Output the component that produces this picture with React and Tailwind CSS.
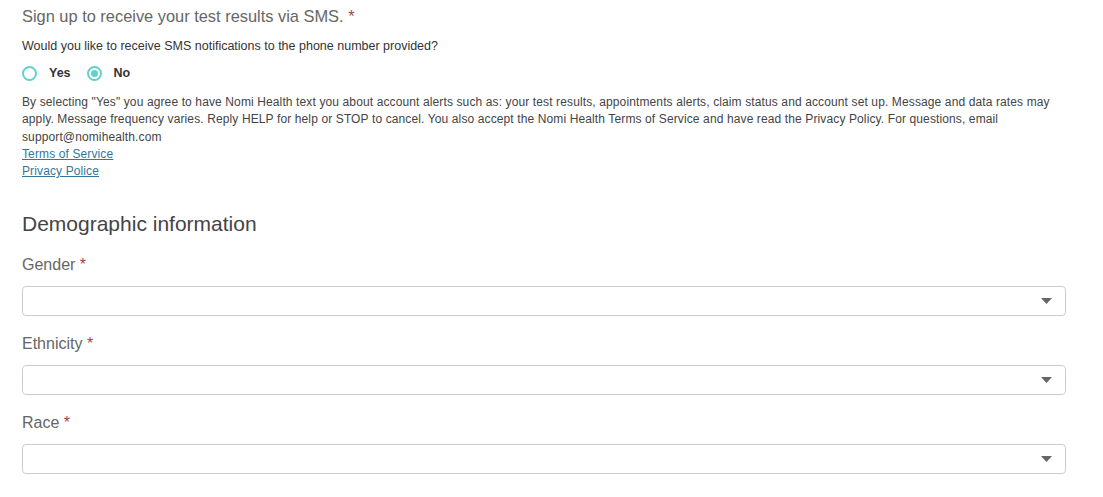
export default function App() {
  const fields = ["Gender", "Ethnicity", "Race"];
  return (
    <div className="bg-white px-[22px] pt-[5px] font-['Liberation_Sans',Arial,sans-serif] w-[1103px] h-[497px] overflow-hidden">
      <h3 className="text-[16.4px] leading-[22px] text-[#666]">
        Sign up to receive your test results via SMS. <span className="text-[#a94442]">*</span>
      </h3>
      <p className="mt-[11px] text-[12.5px] leading-[16px] text-[#333]">
        Would you like to receive SMS notifications to the phone number provided?
      </p>
      <div className="mt-[10px] flex items-center text-[12.5px] font-bold text-[#333]">
        <label className="flex items-center">
          <span className="h-[15px] w-[15px] rounded-full border-2 border-[#5fd3cb] bg-white"></span>
          <span className="ml-[12px]">Yes</span>
        </label>
        <label className="ml-[16px] flex items-center">
          <span className="flex h-[15px] w-[15px] items-center justify-center rounded-full border-2 border-[#5fd3cb] bg-white">
            <span className="h-[7px] w-[7px] rounded-full bg-[#5fd3cb]"></span>
          </span>
          <span className="ml-[12px]">No</span>
        </label>
      </div>
      <p className="mt-[11px] text-[12px] tracking-[0.12px] leading-[17.5px] text-[#444] pr-[20px]">
        By selecting "Yes" you agree to have Nomi Health text you about account alerts such as: your test results, appointments alerts, claim status and account set up. Message and data rates may apply. Message frequency varies. Reply HELP for help or STOP to cancel. You also accept the Nomi Health Terms of Service and have read the Privacy Policy. For questions, email support@nomihealth.com
      </p>
      <div className="flex flex-col items-start text-[12px] tracking-[0.12px] leading-[17px]">
        <a href="#" className="text-[#337799] underline">Terms of Service</a>
        <a href="#" className="text-[#337799] underline">Privacy Police</a>
      </div>
      <h2 className="mt-[31px] text-[21px] leading-[26px] text-[#444]">Demographic information</h2>
      <div className="mt-[18px] flex flex-col gap-[18px] pr-[15px]">
        {fields.map((f) => (
          <div key={f}>
            <div className="text-[16px] leading-[20px] text-[#666]">
              {f} <span className="text-[#a94442]">*</span>
            </div>
            <div className="mt-[11px] flex h-[30px] items-center justify-end rounded-[4px] border border-[#ccc] bg-white pr-[13px]">
              <svg width="11" height="6" viewBox="0 0 11 6">
                <path d="M0 0h11L5.5 6z" fill="#666" />
              </svg>
            </div>
          </div>
        ))}
      </div>
    </div>
  );
}
